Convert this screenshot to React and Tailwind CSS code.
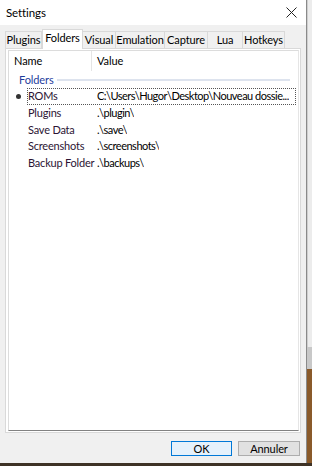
import React from "react";

const tabs = [
  { label: "Plugins", w: "w-[37px]" },
  { label: "Folders", w: "w-[41px]", active: true },
  { label: "Visual", w: "w-[33px]" },
  { label: "Emulation", w: "w-[49px]" },
  { label: "Capture", w: "w-[43px]" },
  { label: "Lua", w: "w-[35px]" },
  { label: "Hotkeys", w: "w-[42px]" },
];

const rows = [
  { name: "ROMs", value: "C:\\Users\\Hugor\\Desktop\\Nouveau dossie...", selected: true },
  { name: "Plugins", value: ".\\plugin\\" },
  { name: "Save Data", value: ".\\save\\" },
  { name: "Screenshots", value: ".\\screenshots\\" },
  { name: "Backup Folder", value: ".\\backups\\" },
];

export default function App() {
  return (
    <div
      className="w-[312px] h-[466px] flex flex-col bg-[#4a3a2a] text-[11px] tracking-[-0.1px] text-black overflow-hidden"
      style={{ fontFamily: 'Lato, "Liberation Sans", sans-serif' }}
    >
      <div className="flex h-[463px]">
        {/* dialog window */}
        <div className="w-[307px] flex flex-col bg-[#f0f0f0] border-r border-[#8a8a8a]">
          <div className="h-[25px] bg-white flex items-center justify-between pl-[6px] pr-[8px]">
            <span className="text-[11.5px]">Settings</span>
            <svg width="11" height="11" viewBox="0 0 11 11" className="mr-[1px]">
              <path d="M0.5 0.5 L10.5 10.5 M10.5 0.5 L0.5 10.5" stroke="#222" strokeWidth="1" />
            </svg>
          </div>

          <div className="flex-1 flex flex-col px-[5px] pt-[5px]">
            {/* tabs */}
            <div className="flex h-[18px] items-end">
              {tabs.map((t) =>
                t.active ? (
                  <div
                    key={t.label}
                    className={`${t.w} h-[20px] -mb-[1px] bg-white border border-b-0 border-[#d9d9d9] flex items-center justify-center pb-[2px] relative z-10 whitespace-nowrap`}
                  >
                    {t.label}
                  </div>
                ) : (
                  <div
                    key={t.label}
                    className={`${t.w} h-[17px] bg-[#f0f0f0] border border-b-0 border-l-0 first:border-l border-[#d9d9d9] flex items-center justify-center whitespace-nowrap`}
                  >
                    {t.label}
                  </div>
                )
              )}
            </div>

            {/* tab panel */}
            <div className="h-[385px] bg-white border border-[#d9d9d9] pt-[1px] pl-[2px] pr-[1px] pb-[1px] flex">
              <div className="flex-1 flex flex-col border border-[#828282] border-t-[#dcdcdc] border-l-[#dcdcdc] border-r-[#e5e5e5]">
                <div className="h-[20px] flex items-center">
                  <div className="w-[83px] h-full pl-[5px] flex items-center border-r border-[#e5e5e5]">Name</div>
                  <div className="pl-[5px]">Value</div>
                </div>
                <div className="h-[16px] flex items-center pl-[10px] pr-[8px] mt-[1px]">
                  <span className="text-[#1e3c9c] mr-[3px]">Folders</span>
                  <div className="flex-1 h-[2px] bg-[#dde3ee]" />
                </div>
                <div className="flex flex-col">
                  {rows.map((r) => (
                    <div key={r.name} className="h-[16.75px] flex items-center">
                      <div className="w-[18px] flex justify-center pl-[1px]">
                        {r.selected && <div className="w-[5px] h-[5px] rounded-full bg-[#333]" />}
                      </div>
                      <div
                        className={`flex-1 h-[17px] flex items-center mr-[2px] ${
                          r.selected ? "border border-dotted border-[#555]" : "border border-transparent"
                        }`}
                      >
                        <div className="w-[69px] text-[#2c1434] whitespace-nowrap tracking-[-0.2px]">{r.name}</div>
                        <div className="whitespace-nowrap overflow-hidden tracking-[-0.5px]">{r.value}</div>
                      </div>
                    </div>
                  ))}
                </div>
              </div>
            </div>

            {/* buttons */}
            <div className="flex justify-end gap-[6px] pt-[8px] pr-[1px]">
              <button className="w-[61px] h-[15px] bg-[#e5f1fb] border border-[#0078d7] text-[11px] leading-none flex items-center justify-center">
                OK
              </button>
              <button className="w-[62px] h-[15px] bg-[#e1e1e1] border border-[#adadad] text-[11px] leading-none flex items-center justify-center">
                Annuler
              </button>
            </div>
          </div>
        </div>

        {/* background strip */}
        <div className="flex-1 flex flex-col">
          <div className="h-[347px] bg-[#ececec] border-l border-[#cfcfcf]" />
          <div className="h-[22px] bg-[#c8c8c8]" />
          <div className="flex-1 bg-[#8a5a2a]" />
        </div>
      </div>
      <div className="flex-1 bg-[#3e3226]" />
    </div>
  );
}
